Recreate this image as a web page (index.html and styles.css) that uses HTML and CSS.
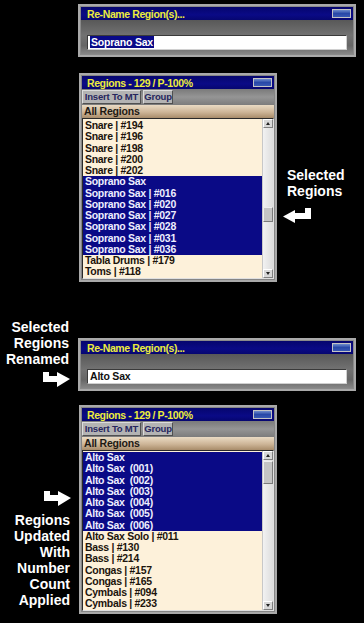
FILE: index.html
```html
<!DOCTYPE html>
<html lang="en">
<head>
  <meta charset="UTF-8" />
  <title>Re-Name Regions</title>
  <link rel="stylesheet" href="styles.css">
</head>
<body>
  <div class="page">

    <div class="row row-top">
      <div class="dialog">
        <div class="titlebar"><span>Re-Name Region(s)...</span><i class="min-btn"></i></div>
        <div class="dialog-body">
          <div class="field"><span class="sel">Soprano Sax</span></div>
        </div>
      </div>
    </div>

    <div class="row row-panel1">
      <div class="panel">
        <div class="titlebar"><span>Regions - 129 / P-100%</span><i class="min-btn"></i></div>
        <div class="toolbar">
          <div class="tool-btn btn-insert">Insert To MT</div>
          <div class="tool-btn btn-group">Group</div>
        </div>
        <div class="list-head">All Regions</div>
        <div class="list">
          <div class="rows">
            <div>Snare | #194</div>
            <div>Snare | #196</div>
            <div>Snare | #198</div>
            <div>Snare | #200</div>
            <div>Snare | #202</div>
            <div class="on">Soprano Sax</div>
            <div class="on">Soprano Sax | #016</div>
            <div class="on">Soprano Sax | #020</div>
            <div class="on">Soprano Sax | #027</div>
            <div class="on">Soprano Sax | #028</div>
            <div class="on">Soprano Sax | #031</div>
            <div class="on">Soprano Sax | #036</div>
            <div>Tabla Drums | #179</div>
            <div>Toms | #118</div>
          </div>
          <div class="scroll">
            <div class="sb-btn sb-up"></div>
            <div class="sb-track"><div class="thumb thumb-mid"></div></div>
            <div class="sb-btn sb-down"></div>
          </div>
        </div>
      </div>
      <div class="note note-right">
        <div>Selected<br>Regions</div>
        <svg class="arrow arrow-back" width="28" height="15" viewBox="0 0 28 15">
          <rect x="22" y="0" width="6" height="11" fill="#fff"/>
          <rect x="10" y="5" width="18" height="6" fill="#fff"/>
          <polygon points="0,8.5 12,2 12,15" fill="#fff"/>
        </svg>
      </div>
    </div>

    <div class="row row-rename">
      <div class="note note-left">
        <div>Selected<br>Regions<br>Renamed</div>
        <svg class="arrow arrow-next" width="27" height="15" viewBox="0 0 27 15">
          <rect x="0" y="0" width="6" height="10" fill="#fff"/>
          <rect x="0" y="4" width="16" height="6" fill="#fff"/>
          <polygon points="14,0 27,7 14,15" fill="#fff"/>
        </svg>
      </div>
      <div class="dialog">
        <div class="titlebar"><span>Re-Name Region(s)...</span><i class="min-btn"></i></div>
        <div class="dialog-body">
          <div class="field"><span>Alto Sax</span></div>
        </div>
      </div>
    </div>

    <div class="row row-panel2">
      <div class="note note-left note-low">
        <svg class="arrow" width="27" height="15" viewBox="0 0 27 15">
          <rect x="0" y="0" width="6" height="10" fill="#fff"/>
          <rect x="0" y="4" width="16" height="6" fill="#fff"/>
          <polygon points="14,0 27,7 14,15" fill="#fff"/>
        </svg>
        <div class="note-text">Regions<br>Updated<br>With<br>Number<br>Count<br>Applied</div>
      </div>
      <div class="panel">
        <div class="titlebar"><span>Regions - 129 / P-100%</span><i class="min-btn"></i></div>
        <div class="toolbar">
          <div class="tool-btn btn-insert">Insert To MT</div>
          <div class="tool-btn btn-group">Group</div>
        </div>
        <div class="list-head">All Regions</div>
        <div class="list">
          <div class="rows">
            <div class="on">Alto Sax</div>
            <div class="on">Alto Sax  (001)</div>
            <div class="on">Alto Sax  (002)</div>
            <div class="on">Alto Sax  (003)</div>
            <div class="on">Alto Sax  (004)</div>
            <div class="on">Alto Sax  (005)</div>
            <div class="on">Alto Sax  (006)</div>
            <div>Alto Sax Solo | #011</div>
            <div>Bass | #130</div>
            <div>Bass | #214</div>
            <div>Congas | #157</div>
            <div>Congas | #165</div>
            <div>Cymbals | #094</div>
            <div>Cymbals | #233</div>
          </div>
          <div class="scroll">
            <div class="sb-btn sb-up"></div>
            <div class="sb-track"><div class="thumb thumb-top"></div></div>
            <div class="sb-btn sb-down"></div>
          </div>
        </div>
      </div>
    </div>

  </div>
</body>
</html>
```

FILE: styles.css
```css
body {
  margin: 0;
  background: #000;
  font-family: 'Liberation Sans', Arial, sans-serif;
}
.page {
  width: 364px;
  height: 623px;
  padding-top: 4px;
  box-sizing: border-box;
  overflow: hidden;
}
.row {
  display: flex;
  align-items: flex-start;
}
.row-top {
  padding-left: 78px;
}
.row-panel1 {
  margin-top: 16px;
  padding-left: 79px;
}
.row-rename {
  margin-top: 37px;
}
.row-rename .dialog {
  margin-top: 19px;
}
.row-panel2 {
  margin-top: 14px;
}

/* window chrome */
.dialog {
  width: 278px;
  border: 2px solid #a9a9a9;
  padding: 1px;
  background: #8a8a8a;
  box-sizing: border-box;
}
.panel {
  width: 198px;
  border: 2px solid #a9a9a9;
  padding: 1px;
  background: #858585;
  box-sizing: border-box;
}
.titlebar {
  height: 13px;
  display: flex;
  align-items: center;
  justify-content: space-between;
  padding: 0 2px 0 6px;
  background: linear-gradient(to bottom, #06066e, #0a0a86 60%, #060670);
  color: #ecec3c;
  font-size: 10.5px;
  font-weight: bold;
  letter-spacing: -0.4px;
}
.panel .titlebar {
  padding-left: 5px;
}
.min-btn {
  display: block;
  width: 17px;
  height: 7px;
  border: 1px solid #c4c4c4;
  background: linear-gradient(to bottom, #6f8ccc, #2848a8 50%, #3858b4);
}
.dialog-body {
  height: 34px;
  padding: 15px 0 0 6px;
  box-sizing: border-box;
  background: linear-gradient(to bottom, #585858, #727272 45%, #666 75%, #868686);
}
.field {
  width: 260px;
  height: 15px;
  box-sizing: border-box;
  background: #fff;
  border: 1px solid #3a3a3a;
  border-right-color: #d0d0d0;
  border-bottom-color: #d0d0d0;
  padding: 0 0 0 2px;
  font-size: 10.5px;
  font-weight: bold;
  line-height: 13px;
  color: #111;
  letter-spacing: -0.2px;
}
.field .sel {
  background: #0a0a88;
  color: #fff;
  padding: 0 1px;
}

/* toolbar */
.toolbar {
  height: 16px;
  display: flex;
  gap: 2px;
  padding: 1px 0 0 0;
  box-sizing: border-box;
  background: linear-gradient(to bottom, #7a7a7a, #959595 50%, #7c7c7c);
}
.tool-btn {
  height: 14px;
  box-sizing: border-box;
  background: #b3b3b3;
  border: 1px solid #dcdcdc;
  border-right-color: #505050;
  border-bottom-color: #505050;
  color: #26265e;
  font-size: 9.5px;
  font-weight: bold;
  line-height: 12px;
  text-align: center;
  letter-spacing: -0.2px;
}
.btn-insert {
  width: 59px;
}
.btn-group {
  width: 30px;
}
.list-head {
  height: 13px;
  padding-left: 2px;
  background: linear-gradient(to bottom, #eadbc4, #cdb597 55%, #a88c6a);
  color: #1e1a14;
  font-size: 10.5px;
  font-weight: bold;
  line-height: 13px;
  letter-spacing: -0.2px;
}

/* list */
.list {
  height: 161px;
  display: flex;
  box-sizing: border-box;
  border: 1px solid #2a2a2a;
  border-right-color: #e0e0e0;
  border-bottom-color: #e0e0e0;
  background: #fdf1da;
  overflow: hidden;
}
.rows {
  flex: 1;
  padding-top: 1px;
}
.rows div {
  height: 11.25px;
  padding-left: 2px;
  font-size: 10.5px;
  font-weight: bold;
  line-height: 11px;
  color: #1c140c;
  white-space: pre;
  letter-spacing: -0.3px;
}
.rows .on {
  background: #0a0a86;
  color: #eeeeff;
}
.scroll {
  width: 10px;
  display: flex;
  flex-direction: column;
  background: #e6e6e6;
  border-left: 1px solid #c8c8c8;
}
.sb-btn {
  height: 9px;
  box-sizing: border-box;
  background: #d8d8d8;
  border: 1px solid #fff;
  border-right-color: #808080;
  border-bottom-color: #808080;
  position: relative;
}
.sb-up::after,
.sb-down::after {
  content: "";
  position: absolute;
  left: 2px;
  top: 2px;
  border-left: 2px solid transparent;
  border-right: 2px solid transparent;
}
.sb-up::after {
  border-bottom: 3px solid #222;
}
.sb-down::after {
  border-top: 3px solid #222;
}
.sb-track {
  flex: 1;
  background: linear-gradient(to right, #f2f2f2, #dcdcdc);
}
.thumb {
  height: 15px;
  box-sizing: border-box;
  background: #c4c4c4;
  border: 1px solid #eee;
  border-right-color: #7a7a7a;
  border-bottom-color: #7a7a7a;
}
.thumb-mid {
  margin-top: 79px;
}
.thumb-top {
  margin-top: 1px;
  height: 23px;
}

/* annotations */
.note {
  color: #fff;
  font-size: 14px;
  font-weight: bold;
  line-height: 16px;
}
.note-right {
  margin: 94px 0 0 10px;
}
.arrow {
  display: block;
}
.arrow-back {
  margin: 9px 0 0 -4px;
}
.note-left {
  width: 78px;
  padding-right: 9px;
  box-sizing: border-box;
  text-align: right;
  display: flex;
  flex-direction: column;
  align-items: flex-end;
}
.arrow-next {
  margin: 5px -1px 0 0;
}
.row-panel2 .note-left {
  width: 79px;
}
.note-low {
  margin-top: 86px;
}
.note-low .arrow {
  margin-right: -1px;
}
.note-text {
  margin-top: 6px;
}
```
